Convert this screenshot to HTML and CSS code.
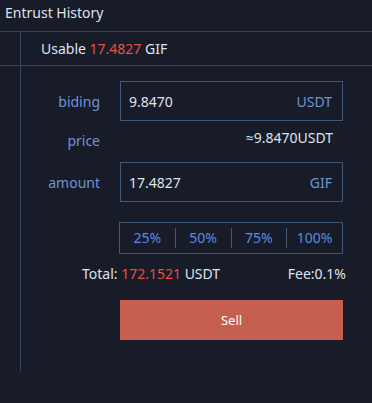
FILE: index.html
```html
<!DOCTYPE html>
<html lang="en">
<head>
    <meta charset="UTF-8">
    <meta name="viewport" content="width=device-width, initial-scale=1.0">
    <title>Entrust</title>
    <link rel="stylesheet" href="styles.css">
</head>
<body>
    <div class="header">Entrust History</div>

    <div class="trade">
        <div class="usable">
            Usable <span class="red">17.4827</span> GIF
        </div>

        <div class="form">
            <div class="row">
                <div class="label">biding</div>
                <div class="field">
                    <span class="value">9.8470</span>
                    <span class="unit">USDT</span>
                </div>
            </div>

            <div class="row price-row">
                <div class="label">price</div>
                <div class="price-value">≈9.8470USDT</div>
            </div>

            <div class="row">
                <div class="label">amount</div>
                <div class="field">
                    <span class="value">17.4827</span>
                    <span class="unit">GIF</span>
                </div>
            </div>

            <div class="row">
                <div class="label"></div>
                <div class="percent">
                    <span>25%</span>
                    <span>50%</span>
                    <span>75%</span>
                    <span>100%</span>
                </div>
            </div>

            <div class="total-row">
                <div>Total: <span class="red">172.1521</span> USDT</div>
                <div>Fee:0.1%</div>
            </div>

            <div class="row">
                <div class="label"></div>
                <button class="sell-button">Sell</button>
            </div>
        </div>
    </div>
</body>
</html>
```

FILE: styles.css
```css
* {
    margin: 0;
    padding: 0;
    box-sizing: border-box;
}

body {
    font-family: 'Noto Sans', 'Open Sans', sans-serif;
    font-size: 14px;
    background: #181b28;
    color: #dfe4ec;
    width: 372px;
    height: 403px;
    overflow: hidden;
}

.header {
    height: 32px;
    padding: 3px 0 0 5px;
    border-bottom: 1px solid #38445e;
    line-height: 20px;
}

.trade {
    margin-left: 20px;
    height: 339px;
    border-left: 1px solid #38445e;
}

.usable {
    margin-left: -21px;
    padding-left: 41px;
    height: 34px;
    line-height: 33px;
    border-bottom: 1px solid #38445e;
}

.red {
    color: #e8503e;
}

.form {
    padding-top: 15px;
    width: 322px;
}

.row {
    display: flex;
    align-items: center;
    gap: 20px;
}

.label {
    width: 79px;
    flex: none;
    text-align: right;
    color: #6d95d6;
}

.field {
    width: 223px;
    height: 40px;
    border: 1px solid #435777;
    display: flex;
    align-items: center;
    justify-content: space-between;
    padding: 0 10px 0 8px;
}

.unit {
    color: #6d95d6;
}

.price-row {
    height: 41px;
    align-items: flex-start;
}

.price-row .label {
    padding-top: 10px;
}

.price-value {
    width: 223px;
    text-align: right;
    padding-right: 10px;
    padding-top: 7px;
}

.percent {
    margin-top: 20px;
    margin-left: -1px;
    width: 225px;
    height: 32px;
    border: 1px solid #435777;
    display: flex;
    align-items: center;
    color: #5b8ae0;
}

.percent span {
    flex: 1;
    text-align: center;
    line-height: 20px;
    border-left: 1px solid #435777;
}

.percent span:first-child {
    border-left: none;
}

.total-row {
    display: flex;
    justify-content: space-between;
    margin: 8px -3px 0 61px;
    height: 24px;
    line-height: 24px;
}

.sell-button {
    margin-top: 14px;
    width: 223px;
    height: 40px;
    border: none;
    background: #c55f50;
    color: #ffffff;
    font-family: inherit;
    font-size: 13px;
}
```
